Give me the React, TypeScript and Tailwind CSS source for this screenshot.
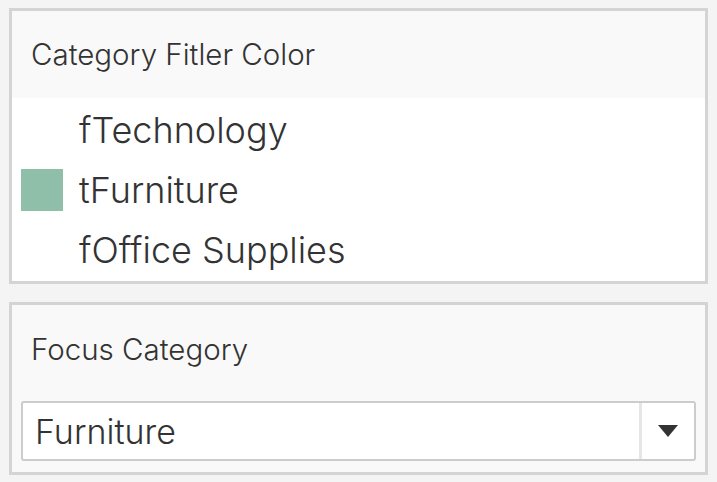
import React from "react";

export default function App() {
  const font = { fontFamily: "Inter, Lato, sans-serif" };
  return (
    <div className="w-[717px] h-[482px] bg-[#f4f4f4] pt-[8px] pl-[9px]" style={font}>
      <div className="w-[699px] h-[276px] border-[3px] border-[#d4d4d4] flex flex-col">
        <div className="h-[87px] bg-[#f9f9f9] flex items-center pl-[19px] text-[29.5px] font-light text-[#333333]">
          Category Fitler Color
        </div>
        <div className="flex-1 bg-white pt-[2px] text-[36px] font-light text-[#333333]">
          {[
            { label: "fTechnology", swatch: false },
            { label: "tFurniture", swatch: true },
            { label: "fOffice Supplies", swatch: false },
          ].map((r) => (
            <div key={r.label} className="h-[60px] flex items-center pl-[9px] gap-[16px]">
              <div className={r.swatch ? "w-[42px] h-[42px] bg-[#8fbfa8]" : "w-[42px] h-[42px]"} />
              <span>{r.label}</span>
            </div>
          ))}
        </div>
      </div>
      <div className="mt-[18px] w-[699px] h-[173px] border-[3px] border-[#d4d4d4] bg-[#f9f9f9] flex flex-col">
        <div className="h-[88px] flex items-center pl-[19px] text-[29.5px] font-light text-[#333333]">Focus Category</div>
        <div className="mt-[8px] mx-[9px] h-[60px] bg-white border-2 border-[#cccccc] rounded-[3px] flex">
          <div className="flex-1 flex items-center pl-[12px] text-[34px] font-light text-[#333333]">Furniture</div>
          <div className="w-[55px] border-l-[3px] border-[#e6e6e6] flex items-center justify-center">
            <svg width="20" height="12" viewBox="0 0 20 12">
              <polygon points="0,0 20,0 10,12" fill="#333333" />
            </svg>
          </div>
        </div>
      </div>
    </div>
  );
}
